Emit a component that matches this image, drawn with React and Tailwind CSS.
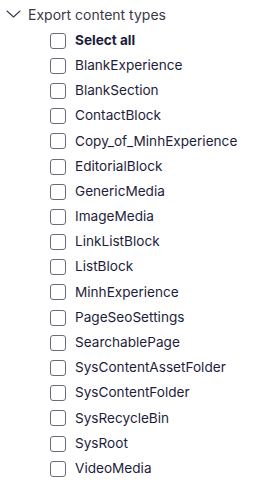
const types = [
  'BlankExperience',
  'BlankSection',
  'ContactBlock',
  'Copy_of_MinhExperience',
  'EditorialBlock',
  'GenericMedia',
  'ImageMedia',
  'LinkListBlock',
  'ListBlock',
  'MinhExperience',
  'PageSeoSettings',
  'SearchablePage',
  'SysContentAssetFolder',
  'SysContentFolder',
  'SysRecycleBin',
  'SysRoot',
  'VideoMedia',
];

const Row = ({ label, bold }) => (
  <label className="flex h-[25.2px] items-center gap-[9px]">
    <span className="h-4 w-4 shrink-0 rounded-[3px] border border-[#6b6b78] bg-white" />
    <span className={`text-[13.6px] leading-none text-[#1d1d3b] ${bold ? 'font-bold' : ''}`}>{label}</span>
  </label>
);

export default function App() {
  return (
    <div className="min-h-screen w-[260px] bg-white pt-[4px] font-['Inter',sans-serif]">
      <div className="flex h-[20px] items-center">
        <svg className="ml-[6px] h-[8px] w-[15px]" viewBox="0 0 15 8" fill="none">
          <path d="M1 1l6.5 6 6.5-6" stroke="#3a3a4e" strokeWidth="1.1" strokeLinecap="round" strokeLinejoin="round" />
        </svg>
        <span className="ml-[7px] text-[14px] text-[#3a3a46]">Export content types</span>
      </div>
      <div className="mt-[4px] pl-[50px]">
        <Row label="Select all" bold />
        {types.map((t) => (
          <Row key={t} label={t} />
        ))}
      </div>
    </div>
  );
}
